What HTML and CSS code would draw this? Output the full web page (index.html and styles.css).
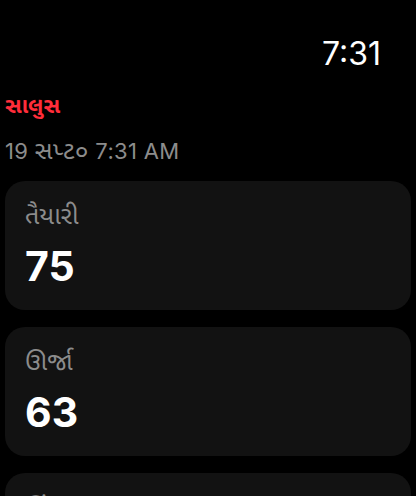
FILE: index.html
```html
<!DOCTYPE html>
<html lang="gu">
<head>
<meta charset="utf-8">
<title>સાલુસ</title>
<link rel="stylesheet" href="styles.css">
</head>
<body>
<div class="screen">
  <header class="statusbar">
    <span class="clock">7:31</span>
  </header>
  <h1 class="title">સાલુસ</h1>
  <p class="date">19 <span class="gu">સપ્ટ૦</span> 7:31 AM</p>
  <section class="card">
    <div class="label">તૈયારી</div>
    <div class="value">75</div>
  </section>
  <section class="card">
    <div class="label">ઊર્જા</div>
    <div class="value">63</div>
  </section>
  <section class="card">
    <div class="label">ઊંઘ</div>
    <div class="value">80</div>
  </section>
</div>
</body>
</html>
```

FILE: styles.css
```css
html, body {
  margin: 0;
  padding: 0;
  background: #000;
}
body {
  width: 416px;
  height: 496px;
  overflow: hidden;
  font-family: Inter, "Noto Sans Gujarati", "Noto Sans", "DejaVu Sans", sans-serif;
  color: #fff;
}
.screen {
  display: flex;
  flex-direction: column;
  padding: 0 5px;
}
.statusbar {
  display: flex;
  justify-content: flex-end;
  padding: 32px 30px 0 0;
  height: 44px;
}
.clock {
  font-size: 32px;
  line-height: 44px;
  font-weight: 400;
  color: #fff;
}
.title {
  margin: 14px 0 0;
  font-size: 22px;
  line-height: 30px;
  font-weight: 700;
  color: #ff2d3a;
}
.date {
  margin: 17px 0 0;
  font-size: 22px;
  line-height: 27px;
  color: #8c8c8c;
  letter-spacing: 0.35px;
}
.date .gu {
  font-size: 25px;
}
.card {
  margin-top: 16px;
  height: 129px;
  box-sizing: border-box;
  background: #121212;
  border-radius: 20px;
  padding: 16px 20px;
  flex-shrink: 0;
}
.card + .card {
  margin-top: 17px;
}
.label {
  font-size: 25px;
  line-height: 36px;
  color: #8c8c8c;
}
.value {
  margin-top: 11px;
  font-size: 41px;
  line-height: 44px;
  font-weight: 700;
  color: #fff;
}
```
